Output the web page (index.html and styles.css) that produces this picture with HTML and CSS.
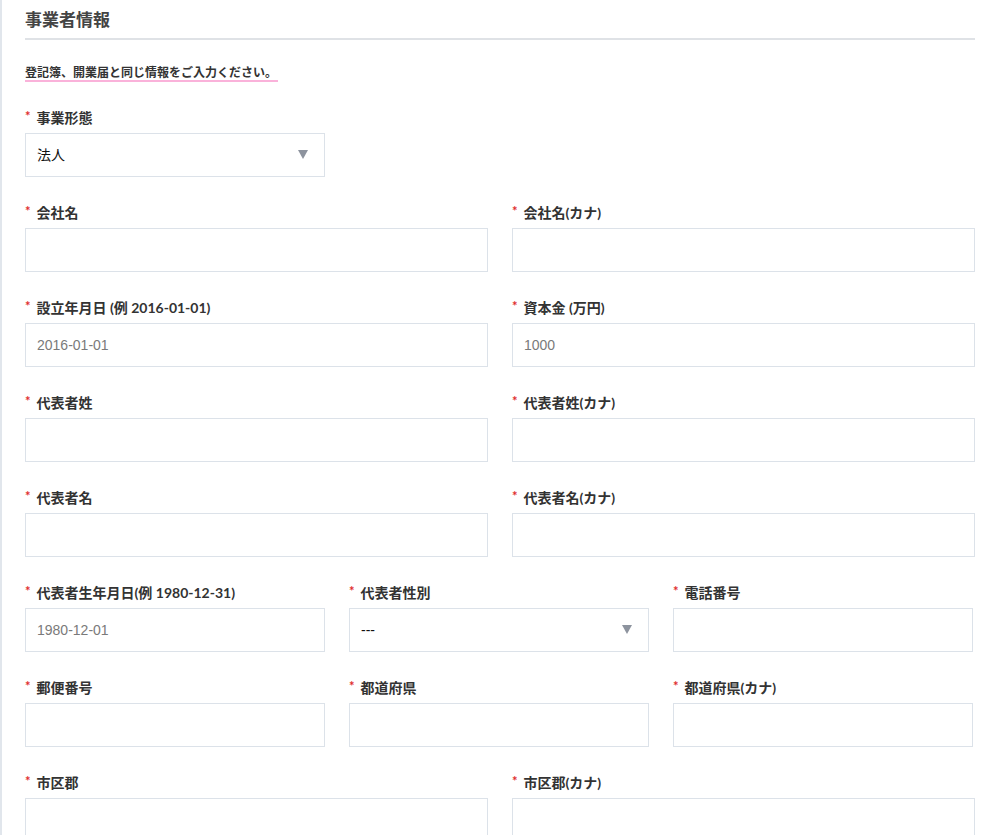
FILE: index.html
```html
<!DOCTYPE html>
<html lang="ja">
<head>
    <meta charset="UTF-8">
    <meta name="viewport" content="width=device-width, initial-scale=1.0">
    <title>事業者情報</title>
    <link rel="stylesheet" href="styles.css">
</head>
<body>
    <div class="panel">
        <h2 class="section-title">事業者情報</h2>
        <p class="lead"><span>登記簿、開業届と同じ情報をご入力ください。</span></p>

        <!-- 事業形態 -->
        <div class="row cols-3">
            <div class="field">
                <label class="req">事業形態</label>
                <div class="select-wrap">
                    <select class="input">
                        <option>法人</option>
                        <option>個人事業主</option>
                    </select>
                </div>
            </div>
        </div>

        <div class="row cols-2">
            <div class="field">
                <label class="req">会社名</label>
                <input class="input" type="text">
            </div>
            <div class="field">
                <label class="req">会社名(カナ)</label>
                <input class="input" type="text">
            </div>
        </div>

        <div class="row cols-2">
            <div class="field">
                <label class="req">設立年月日 (例 2016-01-01)</label>
                <input class="input" type="text" placeholder="2016-01-01">
            </div>
            <div class="field">
                <label class="req">資本金 (万円)</label>
                <input class="input" type="text" placeholder="1000">
            </div>
        </div>

        <div class="row cols-2">
            <div class="field">
                <label class="req">代表者姓</label>
                <input class="input" type="text">
            </div>
            <div class="field">
                <label class="req">代表者姓(カナ)</label>
                <input class="input" type="text">
            </div>
        </div>

        <div class="row cols-2">
            <div class="field">
                <label class="req">代表者名</label>
                <input class="input" type="text">
            </div>
            <div class="field">
                <label class="req">代表者名(カナ)</label>
                <input class="input" type="text">
            </div>
        </div>

        <div class="row cols-3">
            <div class="field">
                <label class="req">代表者生年月日(例 1980-12-31)</label>
                <input class="input" type="text" placeholder="1980-12-01">
            </div>
            <div class="field">
                <label class="req">代表者性別</label>
                <div class="select-wrap">
                    <select class="input">
                        <option>---</option>
                        <option>男性</option>
                        <option>女性</option>
                    </select>
                </div>
            </div>
            <div class="field">
                <label class="req">電話番号</label>
                <input class="input" type="text">
            </div>
        </div>

        <div class="row cols-3">
            <div class="field">
                <label class="req">郵便番号</label>
                <input class="input" type="text">
            </div>
            <div class="field">
                <label class="req">都道府県</label>
                <input class="input" type="text">
            </div>
            <div class="field">
                <label class="req">都道府県(カナ)</label>
                <input class="input" type="text">
            </div>
        </div>

        <div class="row cols-2">
            <div class="field">
                <label class="req">市区郡</label>
                <input class="input" type="text">
            </div>
            <div class="field">
                <label class="req">市区郡(カナ)</label>
                <input class="input" type="text">
            </div>
        </div>
    </div>
</body>
</html>
```

FILE: styles.css
```css
/* 事業者情報フォーム */
* {
    margin: 0;
    padding: 0;
    box-sizing: border-box;
}

body {
    background-color: #fff;
    font-family: Lato, "Noto Sans CJK JP", sans-serif;
    color: #333;
}

.panel {
    border-left: 2px solid #e1e6ec;
    padding: 0 22px 40px 23px;
    min-height: 100vh;
}

.section-title {
    font-size: 17px;
    font-weight: bold;
    color: #444;
    line-height: 24px;
    padding-top: 8px;
    padding-bottom: 6px;
    border-bottom: 2px solid #dfe2e6;
}

.lead {
    margin-top: 25px;
    font-size: 12px;
    font-weight: bold;
    line-height: 15px;
    color: #333;
}

.lead span {
    display: inline-block;
    padding-right: 1px;
    border-bottom: 2px solid #fab2da;
}

.row {
    display: grid;
    column-gap: 24px;
}

.lead + .row {
    margin-top: 27px;
}

.row + .row {
    margin-top: 27px;
}

.cols-2 {
    grid-template-columns: 1fr 1fr;
}

.cols-3 {
    grid-template-columns: 300px 300px 300px;
}

.field label {
    display: block;
    font-size: 14px;
    font-weight: bold;
    line-height: 18px;
    margin-bottom: 6px;
    color: #333;
}

.field label.req::before {
    content: "*";
    color: #e02b2b;
    font-size: 13px;
    margin-right: 6px;
    position: relative;
    top: -2px;
}

.input {
    display: block;
    width: 100%;
    height: 44px;
    border: 1px solid #dce2e9;
    border-radius: 0;
    background-color: #fff;
    padding: 0 11px;
    font-family: "Liberation Sans", Arial, "Noto Sans CJK JP", sans-serif;
    font-size: 14px;
    color: #111;
    outline: none;
}

.input::placeholder {
    color: #7a7a7a;
    opacity: 1;
}

select.input {
    appearance: none;
    -webkit-appearance: none;
    cursor: pointer;
}

.select-wrap {
    position: relative;
}

/* arrow of the select box */
.select-wrap::after {
    content: "";
    position: absolute;
    right: 17px;
    top: 17px;
    border-left: 5px solid transparent;
    border-right: 5px solid transparent;
    border-top: 9px solid #8d939e;
    pointer-events: none;
}
```
